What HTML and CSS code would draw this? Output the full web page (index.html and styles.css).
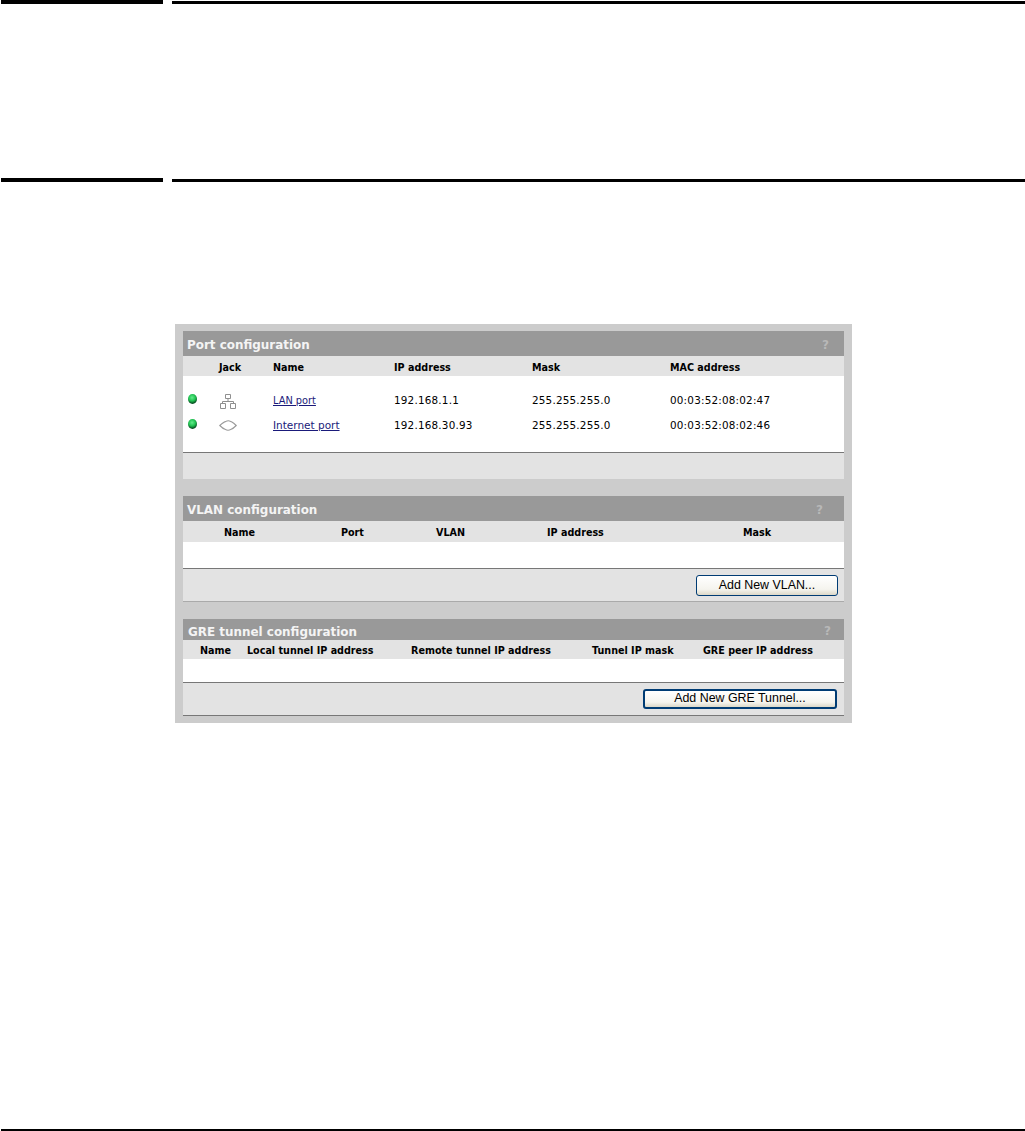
FILE: index.html
```html
<!DOCTYPE html>
<html lang="en">
<head>
<meta charset="utf-8">
<title>Port configuration</title>
<link rel="stylesheet" href="styles.css">
</head>
<body>
<div class="page">
  <div class="rule rule-top"><span class="rule-thick"></span><span class="rule-thin"></span></div>
  <div class="rule rule-mid"><span class="rule-thick"></span><span class="rule-thin"></span></div>
  <div class="panel">
    <section class="box box-port">
      <div class="title"><h2>Port configuration</h2><span class="help">?</span></div>
      <div class="cols cols-port">
        <span></span><span>Jack</span><span>Name</span><span>IP address</span><span>Mask</span><span>MAC address</span>
      </div>
      <div class="body body-port">
        <div class="row cols-port">
          <span class="led"></span>
          <svg class="jack" width="16" height="15" viewBox="0 0 16 15" fill="none" stroke="#8f8f8f" stroke-width="1"><path d="M5.500 .5h5v4h-5zM8 4.500v3M2.500 7.500h11M2.500 7.500v2M13.500 7.500v2M.5 9.500h5v5h-5zM10.500 9.500h5v5h-5z"/></svg>
          <a class="link-short" href="#">LAN port</a><span class="val">192.168.1.1</span><span class="val">255.255.255.0</span><span class="val">00:03:52:08:02:47</span>
        </div>
        <div class="row cols-port">
          <span class="led"></span>
          <svg class="jack jack-cloud" width="18" height="11" viewBox="0 0 18 11" fill="none" stroke="#9a9a9a" stroke-width="1.100"><path d="M.8 5.500C2.500 4 5.500 1.600 6.500 1.600 7.500 1 8.500.8 9.500.8c1 0 2 .6 3 1 1.500.8 3.500 2.500 4.700 3.700-1.500 1.500-3.700 3.300-5 3.800-1 .5-2 .9-3.200.9-1 0-2-.4-3-.9C4.500 8.800 2.300 7 .8 5.500z"/></svg>
          <a class="link-long" href="#">Internet port</a><span class="val">192.168.30.93</span><span class="val">255.255.255.0</span><span class="val">00:03:52:08:02:46</span>
        </div>
      </div>
      <div class="foot foot-port"></div>
    </section>
    <section class="box box-vlan">
      <div class="title"><h2>VLAN configuration</h2><span class="help">?</span></div>
      <div class="cols cols-vlan"><span>Name</span><span>Port</span><span>VLAN</span><span>IP address</span><span>Mask</span></div>
      <div class="body body-vlan"></div>
      <div class="foot foot-vlan"><button class="btn btn-vlan" type="button">Add New VLAN...</button></div>
    </section>
    <section class="box box-gre">
      <div class="title"><h2>GRE tunnel configuration</h2><span class="help">?</span></div>
      <div class="cols cols-gre"><span>Name</span><span>Local tunnel IP address</span><span>Remote tunnel IP address</span><span>Tunnel IP mask</span><span>GRE peer IP address</span></div>
      <div class="body body-gre"></div>
      <div class="foot foot-gre"><button class="btn btn-gre" type="button">Add New GRE Tunnel...</button></div>
    </section>
  </div>
  <div class="rule rule-bottom"></div>
</div>
</body>
</html>
```
FILE: styles.css
```css
* { box-sizing: border-box; }
html, body { margin: 0; padding: 0; background: #fff; }
body { font-family: "DejaVu Sans", Verdana, sans-serif; color: #000; }
.page { width: 1025px; height: 1131px; overflow: hidden; display: flex; flex-direction: column; }

.rule { display: flex; align-items: flex-start; }
.rule-thick { width: 162px; height: 4px; margin-left: 1px; background: #000; }
.rule-thin { flex: 1; height: 3px; margin-left: 9px; margin-top: 1px; background: #000; }
.rule-top { height: 4px; }
.rule-mid { margin-top: 174px; height: 4px; }
.rule-bottom { margin-top: 406px; margin-left: 1px; height: 2px; background: #000; }

.panel { margin: 142px 0 0 175px; width: 677px; height: 400px; background: #ccc; padding: 7px 8px 0; display: flex; flex-direction: column; }

.box { display: flex; flex-direction: column; }
.box-vlan { margin-top: 17px; }
.box-gre { margin-top: 17px; }

.title { display: flex; justify-content: space-between; align-items: center; background: #999; color: #f4f4f4; padding: 3px 15px 0 4px; }
.title h2 { margin: 0; font-size: 11.950px; font-weight: 700; line-height: 1; }
.box-port .title { height: 25px; }
.box-vlan .title { height: 25px; padding-right: 21px; }
.box-port .title h2, .box-vlan .title h2 { padding-top: 2px; }
.box-gre .title { height: 21px; padding-right: 13px; }
.box-gre .title h2 { padding-left: 1px; padding-top: 3px; }
.help { font-size: 12px; font-weight: 700; color: #b8b8b8; }

.cols { display: grid; align-items: center; background: #e3e3e3; font-size: 9.600px; font-weight: 700; white-space: nowrap; padding-top: 2px; }
.cols-port { grid-template-columns: 36px 54px 121px 138px 138px 1fr; }
.box-port > .cols { height: 20px; }
.cols-vlan { height: 21px; padding-left: 41px; grid-template-columns: 117px 95px 111px 196px 1fr; }
.cols-gre { height: 19px; padding-left: 17px; grid-template-columns: 47px 164px 181px 111px 1fr; }

.body { background: #fff; border-bottom: 1px solid #777; }
.body-port { height: 77px; padding-top: 12px; display: flex; flex-direction: column; gap: 1px; }
.body-vlan { height: 27px; }
.body-gre { height: 24px; }

.row { display: grid; height: 24px; align-items: center; font-size: 9.500px; white-space: nowrap; }
.row a { color: #1a1a7a; text-decoration: underline; }
.val { font-size: 10.400px; letter-spacing: .2px; }
.link-short { font-size: 9.800px; }
.link-long { font-size: 10.500px; }
.led { width: 9px; height: 10px; margin: -3px 0 0 5px; border-radius: 50%; background: radial-gradient(circle at 45% 36%, #63ec8c 0, #1fc150 42%, #0a5a26 68%, #04291a 100%); }
.jack { display: block; margin: 2px 0 0 1px; }
.jack-cloud { margin: 1px 0 0 0; }

.foot { background: #e3e3e3; display: flex; justify-content: flex-end; align-items: flex-start; border-bottom: 1px solid #aaa; }
.foot-port { height: 26px; border-bottom: 0; }
.foot-vlan { height: 33px; padding: 6px 6px 0 0; }
.foot-gre { height: 33px; padding: 6px 7px 0 0; border-bottom-color: #777; }

.btn { font-family: "Liberation Sans", Arial, sans-serif; font-size: 12.400px; color: #000; padding: 0 0 2px; border: 1px solid #003c74; border-radius: 3px; background: linear-gradient(#fff, #f5f4ee 70%, #dcd8c8); }
.btn-vlan { width: 142px; height: 21px; }
.btn-gre { width: 194px; height: 20px; border-width: 2px; padding-bottom: 3px; }
```
